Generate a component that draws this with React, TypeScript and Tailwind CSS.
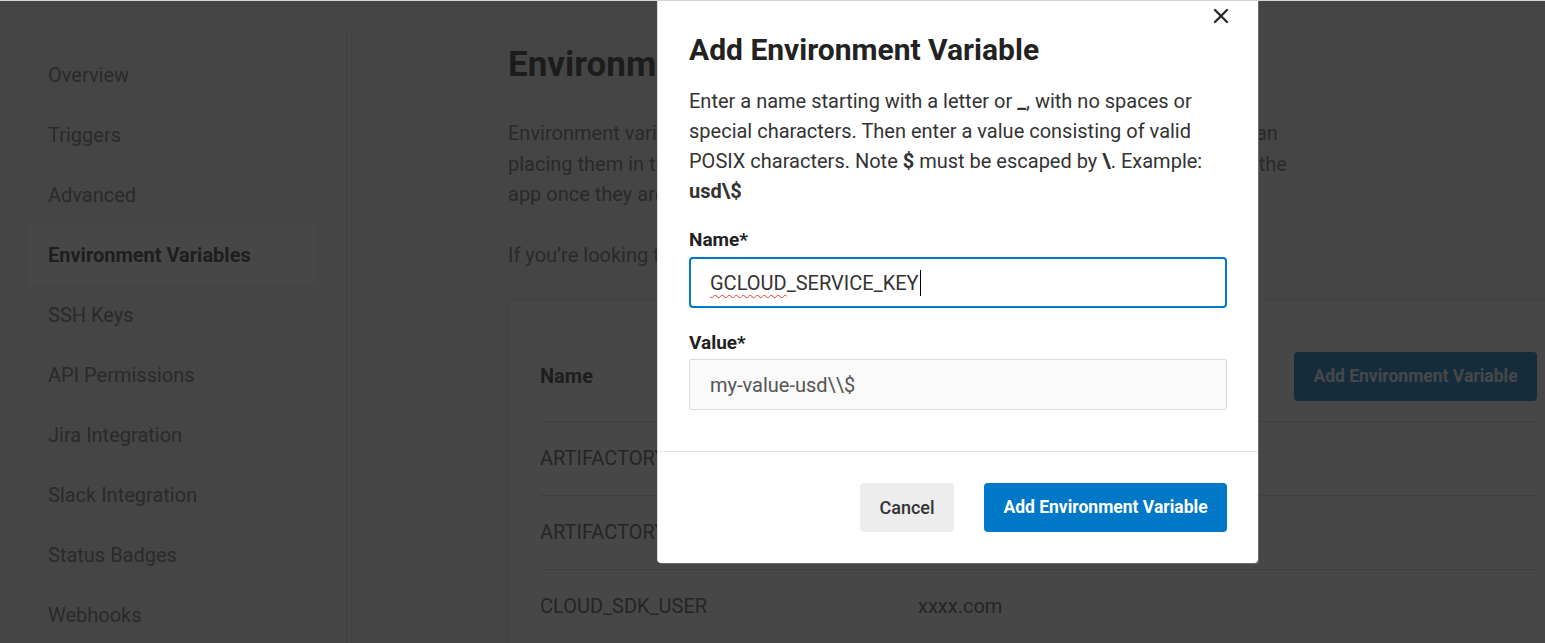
import { X } from "lucide-react";

const navItems = [
  "Overview",
  "Triggers",
  "Advanced",
  "Environment Variables",
  "SSH Keys",
  "API Permissions",
  "Jira Integration",
  "Slack Integration",
  "Status Badges",
  "Webhooks",
];

const rows = [
  { name: "ARTIFACTORY_USER", value: "xxxx" },
  { name: "ARTIFACTORY_API_KEY", value: "xxxx" },
  { name: "CLOUD_SDK_USER", value: "xxxx.com" },
];

export default function App() {
  return (
    <div className="relative h-[643px] w-full overflow-hidden bg-[#f5f5f5] font-['Roboto',sans-serif]">
      {/* Page behind the modal */}
      <div className="flex h-full">
        {/* Sidebar */}
        <aside className="mt-[25px] w-[347px] shrink-0 border-r border-[#d9d9d9] pt-[20px]">
          <ul className="ml-[28px] w-[289px]">
            {navItems.map((item) => (
              <li
                key={item}
                className={
                  item === "Environment Variables"
                    ? "flex h-[60px] items-center bg-white px-[20px] text-[20px] font-bold text-[#333]"
                    : "flex h-[60px] items-center px-[20px] text-[20px] text-[#6e6e6e]"
                }
              >
                {item}
              </li>
            ))}
          </ul>
        </aside>

        {/* Main */}
        <main className="pl-[161px] pt-[43px]">
          <h1 className="text-[35px] leading-[44px] font-bold text-[#2b2b2b]">Environment Variables</h1>
          <p className="mt-[31px] text-[20px] leading-[30.5px] text-[#6b6b6b]">
            Environment variables let you add sensitive data (e.g. API keys) to your jobs rather than
            <br />
            placing them in the repository. The values are hidden and cannot be read or edited in the
            <br />
            app once they are set.
          </p>
          <p className="mt-[30px] text-[20px] leading-[30px] text-[#6b6b6b]">
            If you’re looking to add private keys, go to SSH Keys instead.
          </p>

          <div className="mt-[30px] w-[1061px] rounded-[4px] border border-[#e6e6e6] bg-white px-[31px]">
            <div className="flex items-center justify-between border-b border-[#d6d6d6] pt-[51px] pb-[20px]">
              <span className="text-[20px] font-bold text-[#333]">Name</span>
              <button className="h-[49px] w-[243px] rounded-[4px] bg-[#0078c8] text-[17.5px] font-bold text-white">
                Add Environment Variable
              </button>
            </div>
            {rows.map((r) => (
              <div key={r.name} className="flex h-[74px] items-center border-b border-[#d6d6d6] text-[20px] text-[#555]">
                <span className="w-[378px]">{r.name}</span>
                <span>{r.value}</span>
              </div>
            ))}
          </div>
        </main>
      </div>

      {/* Dim overlay */}
      <div className="absolute inset-0 bg-[rgba(25,25,25,0.8)]" />

      {/* Modal */}
      <div className="absolute left-[658px] top-0 w-[600px] rounded-b-[4px] bg-white shadow-[-1px_0_0_#dcdcdc,1px_1px_0_#6b6b6b]">
        <button className="absolute right-[25px] top-[4px] text-[#2b2b2b]">
          <X size={24} strokeWidth={2.4} />
        </button>
        <div className="px-[31px] pt-[32px] pb-[41px]">
          <h2 className="text-[30px] leading-[36px] font-bold text-[#222]">Add Environment Variable</h2>
          <p className="mt-[18px] text-[20px] leading-[30px] text-[#333]">
            Enter a name starting with a letter or <b>_</b>, with no spaces or
            <br />
            special characters. Then enter a value consisting of valid
            <br />
            POSIX characters. Note <b>$</b> must be escaped by <b>\</b>. Example:
            <br />
            <b>usd\$</b>
          </p>

          <label className="mt-[22px] block text-[19px] leading-[24px] font-bold text-[#222]">Name*</label>
          <div className="mt-[5px] flex h-[51px] items-center rounded-[4px] border-2 border-[#0078c8] px-[19px] text-[20px] text-[#333]">
            <span className="underline decoration-[#e53935] decoration-wavy decoration-1 underline-offset-[4px]">GCLOUD</span>
            <span>_SERVICE_KEY</span>
            <span className="ml-px inline-block h-[26px] w-px bg-black" />
          </div>

          <label className="mt-[23px] block text-[19px] leading-[24px] font-bold text-[#222]">Value*</label>
          <div className="mt-[4px] flex h-[51px] items-center rounded-[2px] border border-[#dcdcdc] bg-[#fafafa] px-[20px] text-[20px] text-[#555]">
            my-value-usd\\$
          </div>
        </div>

        <div className="flex justify-end gap-[30px] border-t border-[#e3e3e3] px-[31px] pt-[31px] pb-[31px]">
          <button className="h-[49px] w-[94px] rounded-[4px] bg-[#ededed] text-[18px] font-medium text-[#333]">
            Cancel
          </button>
          <button className="h-[49px] w-[243px] rounded-[4px] bg-[#0078c8] text-[17.5px] font-bold text-white">
            Add Environment Variable
          </button>
        </div>
      </div>

      {/* Window top edge */}
      <div className="absolute left-0 top-0 h-px w-full bg-[#d4d4d4]" />
    </div>
  );
}
